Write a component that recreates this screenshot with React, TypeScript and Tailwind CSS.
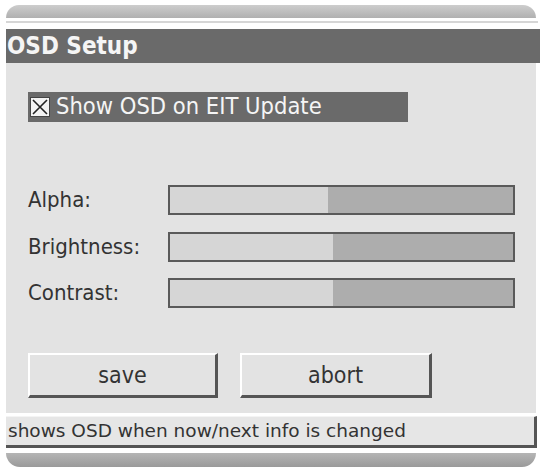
import React from 'react';

const sliders = [
  { label: 'Alpha:', value: 46 },
  { label: 'Brightness:', value: 47.5 },
  { label: 'Contrast:', value: 47.5 },
];

function Slider({ value }: { value: number }) {
  return (
    <div className="w-[347px] h-[30px] border-2 border-[#5a5a5a] bg-[#adadad] flex">
      <div className="h-full bg-[#d6d6d6]" style={{ width: `${value}%` }} />
    </div>
  );
}

export default function App() {
  return (
    <div className="w-[540px] h-[467px] bg-white overflow-hidden text-[#333] font-['DejaVu_Sans_Condensed','DejaVu_Sans',sans-serif]">
      <div className="pt-[5px] pl-[6px]">
        <div className="w-[530px] h-[13px] rounded-t-[14px] bg-gradient-to-b from-[#cdcdcd] to-[#b0b0b0]" />
      </div>
      <div className="mt-[3px] ml-[6px] w-[532px] h-[2px] bg-[#d6d6d6]" />

      <div className="mt-[6px] ml-[6px] h-[34px] bg-[#6a6a6a] flex items-center pl-[1px]">
        <span className="text-[24px] font-bold text-[#f5f5f5] leading-none">OSD Setup</span>
      </div>

      <div className="ml-[6px] w-[530px] h-[350px] bg-[#e3e3e3] pl-[22px] pt-[29px] flex flex-col">
        <div className="w-[380px] h-[30px] bg-[#6a6a6a] flex items-center pl-[2px] gap-[6px]">
          <svg width="20" height="20" viewBox="0 0 20 20" className="shrink-0">
            <rect x="0.5" y="0.5" width="19" height="19" fill="#f2f2f2" stroke="#444" />
            <path d="M3 3 L17 17 M17 3 L3 17" stroke="#222" strokeWidth="1.6" />
          </svg>
          <span className="text-[23.5px] text-[#f5f5f5] leading-none">Show OSD on EIT Update</span>
        </div>

        <div className="mt-[63px] flex flex-col gap-[16.5px]">
          {sliders.map((s) => (
            <div key={s.label} className="flex items-center">
              <span className="w-[140px] text-[22px] leading-none">{s.label}</span>
              <Slider value={s.value} />
            </div>
          ))}
        </div>

        <div className="mt-[45px] flex gap-[22px]">
          <button className="w-[190px] h-[45px] bg-[#e3e3e3] border-t-2 border-l-2 border-t-white border-l-white border-b-[3px] border-r-[3px] border-b-[#555] border-r-[#555] text-[23px] leading-none text-[#333]">
            save
          </button>
          <button className="w-[192px] h-[45px] bg-[#e3e3e3] border-t-2 border-l-2 border-t-white border-l-white border-b-[3px] border-r-[3px] border-b-[#555] border-r-[#555] text-[23px] leading-none text-[#333]">
            abort
          </button>
        </div>
      </div>

      <div className="mt-[3px] ml-[6px] w-[531px] h-[32px] bg-[#e6e6e6] border-t border-t-[#f4f4f4] border-b-[3px] border-r-[3px] border-b-[#555] border-r-[#555] flex items-center pl-[2px]">
        <span className="text-[18.5px] leading-none font-['DejaVu_Sans',sans-serif] text-[#333]">shows OSD when now/next info is changed</span>
      </div>

      <div className="mt-[5px] ml-[6px] w-[530px] h-[14px] rounded-b-[14px] bg-gradient-to-b from-[#b5b5b5] to-[#9a9a9a]" />
    </div>
  );
}
